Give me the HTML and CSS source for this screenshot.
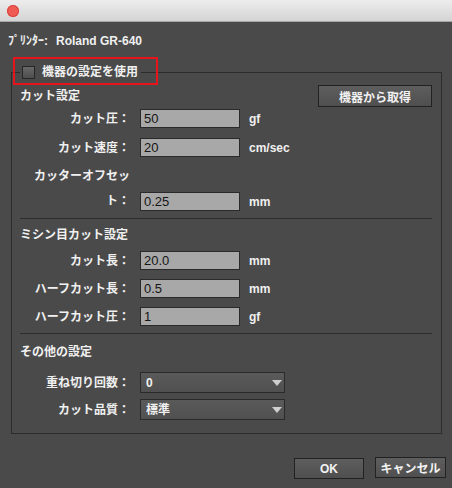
FILE: index.html
```html
<!DOCTYPE html>
<html lang="ja">
<head>
<meta charset="utf-8">
<title>機器の設定</title>
<link rel="stylesheet" href="styles.css">
</head>
<body>
<div class="titlebar"><span class="close"></span></div>
<div class="printer"><span class="plabel">ﾌﾟﾘﾝﾀｰ:</span>Roland GR-640</div>
<div class="group">
  <div class="redbox"></div>
  <div class="legend"><span class="cb"></span><span class="legend-text">機器の設定を使用</span></div>
  <div class="head-row">
    <span class="sec-title">カット設定</span>
    <button class="btn btn-get">機器から取得</button>
  </div>
  <div class="rows rows1">
    <div class="row"><span class="lbl">カット圧：</span><div class="ctl"><div class="field">50</div><span class="unit">gf</span></div></div>
    <div class="row"><span class="lbl">カット速度：</span><div class="ctl"><div class="field">20</div><span class="unit">cm/sec</span></div></div>
    <div class="row tall"><span class="lbl">カッターオフセット：</span><div class="ctl"><div class="field">0.25</div><span class="unit">mm</span></div></div>
  </div>
  <div class="sep sep1"></div>
  <div class="sec">ミシン目カット設定</div>
  <div class="rows rows2">
    <div class="row"><span class="lbl">カット長：</span><div class="ctl"><div class="field">20.0</div><span class="unit">mm</span></div></div>
    <div class="row"><span class="lbl">ハーフカット長：</span><div class="ctl"><div class="field">0.5</div><span class="unit">mm</span></div></div>
    <div class="row"><span class="lbl">ハーフカット圧：</span><div class="ctl"><div class="field">1</div><span class="unit">gf</span></div></div>
  </div>
  <div class="sep sep2"></div>
  <div class="sec sec3">その他の設定</div>
  <div class="rows rows3">
    <div class="row drow"><span class="lbl">重ね切り回数：</span><div class="dd"><span>0</span><svg class="arrow" width="10" height="6" viewBox="0 0 10 6"><polygon points="0,0 10,0 5,6" fill="#cfcfcf"/></svg></div></div>
    <div class="row drow"><span class="lbl">カット品質：</span><div class="dd"><span>標準</span><svg class="arrow" width="10" height="6" viewBox="0 0 10 6"><polygon points="0,0 10,0 5,6" fill="#cfcfcf"/></svg></div></div>
  </div>
</div>
<div class="actions">
  <button class="btn btn-ok">OK</button>
  <button class="btn btn-cancel">キャンセル</button>
</div>
</body>
</html>
```
FILE: styles.css
```css
html, body {
  margin: 0;
  padding: 0;
}
body {
  width: 452px;
  height: 488px;
  overflow: hidden;
  background: #4a4a4a;
  font-family: "Liberation Sans", "Noto Sans CJK JP", sans-serif;
  font-size: 12px;
  font-weight: bold;
  color: #f0f0f0;
}
.titlebar {
  height: 21px;
  border-bottom: 1px solid #a6a6a6;
  background: linear-gradient(#ededed, #d4d4d4);
  display: flex;
  align-items: center;
  padding-left: 7px;
}
.close {
  width: 12px;
  height: 12px;
  border-radius: 50%;
  background: #ef5b53;
  box-shadow: inset 0 0 0 1px #d9453e;
}
.printer {
  margin: 11px 0 0 8px;
  line-height: 16px;
}
.plabel {
  margin-right: 8px;
}
.group {
  position: relative;
  margin: 23px 0 0 11px;
  width: 431px;
  box-sizing: border-box;
  border: 1px solid #2c2c2c;
  padding: 0 9px 13px 8px;
}
.redbox {
  position: absolute;
  left: 1px;
  top: -16px;
  width: 145px;
  height: 28px;
  box-sizing: border-box;
  border: 2px solid #e8141c;
}
.legend {
  display: flex;
  align-items: center;
  height: 14px;
  margin-top: -8px;
  width: fit-content;
  background: #4a4a4a;
  padding: 0 3px 0 2px;
}
.cb {
  width: 13px;
  height: 13px;
  box-sizing: border-box;
  border: 1px solid #262626;
  background: linear-gradient(#686868, #4e4e4e);
  margin-right: 7px;
}
.legend-text {
  line-height: 14px;
}
.head-row {
  display: flex;
  justify-content: space-between;
  align-items: center;
  height: 22px;
  margin-top: 6px;
}
.sec-title, .sec {
  line-height: 16px;
}
.btn {
  padding: 0;
  margin: 0;
  font: inherit;
  color: #f2f2f2;
  box-sizing: border-box;
  border: 1px solid #222;
  background: linear-gradient(#5e5e5e, #4f4f4f);
  display: flex;
  align-items: center;
  justify-content: center;
}
.btn-get {
  width: 114px;
  height: 22px;
}
.rows {
  display: flex;
  flex-direction: column;
}
.rows1 {
  gap: 10px;
  margin-top: 2px;
}
.rows2 {
  gap: 9px;
  margin-top: 8px;
}
.rows3 {
  gap: 6px;
  margin-top: 12px;
}
.row {
  display: flex;
  align-items: center;
  height: 19px;
}
.row.tall {
  height: auto;
  align-items: flex-end;
  margin-top: -3px;
}
.row.tall .lbl {
  line-height: 25px;
}
.row.tall .ctl {
  margin-bottom: 3px;
}
.lbl {
  width: 96px;
  margin-left: 14px;
  text-align: right;
  line-height: 16px;
}
.ctl {
  display: flex;
  align-items: center;
  margin-left: 10px;
}
.field {
  width: 100px;
  height: 19px;
  box-sizing: border-box;
  border: 1px solid #2a2a2a;
  background: #a8a8a8;
  color: #151515;
  font-weight: normal;
  font-size: 13px;
  line-height: 17px;
  padding-left: 3px;
}
.unit {
  margin-left: 9px;
  line-height: 16px;
}
.sep {
  border-top: 1px solid #2e2e2e;
}
.sep1 {
  margin-top: 4px;
}
.sep2 {
  margin-top: 7px;
}
.sec {
  margin-top: 8px;
}
.sec3 {
  margin-top: 10px;
}
.drow {
  height: 21px;
}
.dd {
  width: 145px;
  height: 21px;
  box-sizing: border-box;
  margin-left: 10px;
  border: 1px solid #2a2a2a;
  background: linear-gradient(#5a5a5a, #505050);
  display: flex;
  align-items: center;
  justify-content: space-between;
  padding: 0 2px 0 5px;
  line-height: 16px;
}
.arrow {
  display: block;
}
.actions {
  display: flex;
  justify-content: flex-end;
  align-items: flex-start;
  gap: 11px;
  margin-top: 23px;
  padding-right: 6px;
}
.btn-ok {
  width: 70px;
  height: 21px;
  margin-top: 1px;
}
.btn-cancel {
  width: 71px;
  height: 21px;
}
```
